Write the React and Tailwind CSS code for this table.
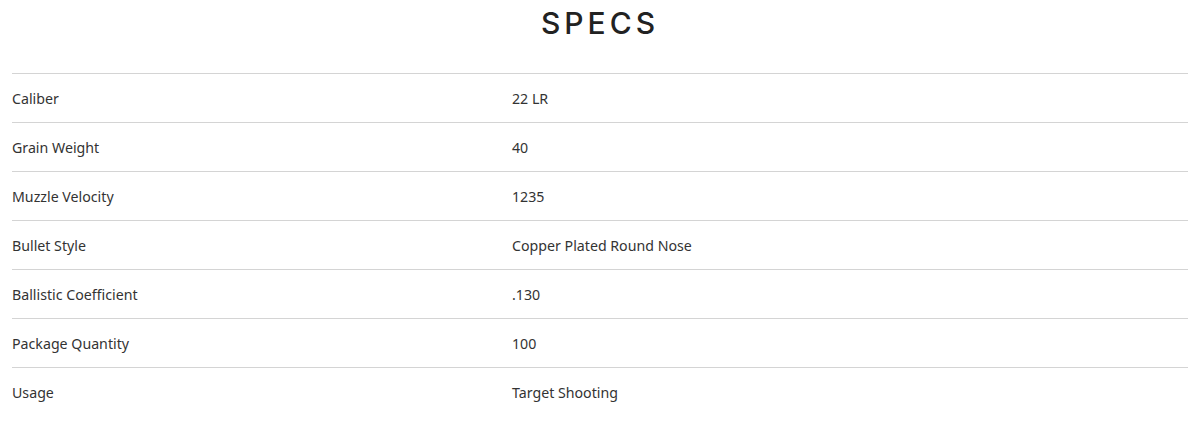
import React from 'react'

const specs = [
    ['Caliber', '22 LR'],
    ['Grain Weight', '40'],
    ['Muzzle Velocity', '1235'],
    ['Bullet Style', 'Copper Plated Round Nose'],
    ['Ballistic Coefficient', '.130'],
    ['Package Quantity', '100'],
    ['Usage', 'Target Shooting'],
]

const App = () => {
    return (
        <div className="bg-white px-3 text-[#333]" style={{ fontFamily: '"Noto Sans", sans-serif' }}>
            <h2 className="h-[73px] pt-[4px] text-center text-[30px] font-medium leading-[38px] tracking-[4px] text-[#222]" style={{ fontFamily: 'Inter, sans-serif' }}>
                SPECS
            </h2>
            <div>
                {specs.map(([label, value]) => (
                    <div key={label} className="flex h-[49px] items-center border-t border-[#d4d4d4] pt-[2px] text-[14.2px]">
                        <div className="w-[500px]">{label}</div>
                        <div>{value}</div>
                    </div>
                ))}
            </div>
        </div>
    )
}

export default App
